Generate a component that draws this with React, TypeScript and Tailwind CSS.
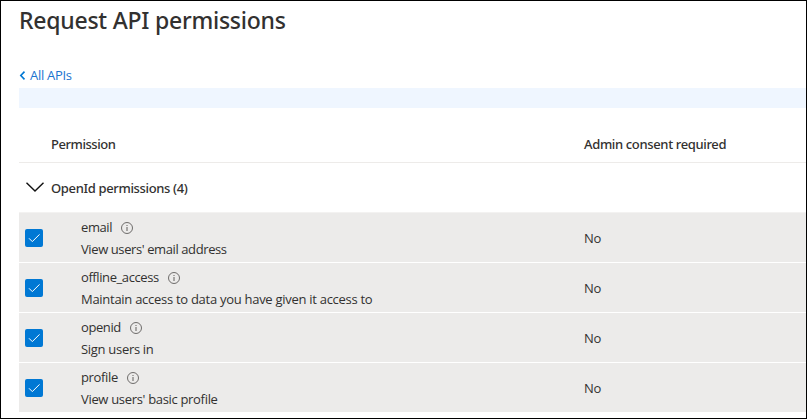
type Permission = {
  name: string;
  description: string;
  nameClass: string;
  descriptionClass: string;
};

const permissions: Permission[] = [
  { name: 'email', description: "View users' email address", nameClass: 'tracking-[-0.4px]', descriptionClass: 'tracking-[-0.4px]' },
  { name: 'offline_access', description: 'Maintain access to data you have given it access to', nameClass: 'tracking-[-0.41px]', descriptionClass: 'tracking-[-0.28px]' },
  { name: 'openid', description: 'Sign users in', nameClass: 'tracking-[-0.4px]', descriptionClass: 'tracking-[-0.3px]' },
  { name: 'profile', description: "View users' basic profile", nameClass: 'tracking-[-0.35px]', descriptionClass: 'tracking-[-0.32px]' },
];

function InfoIcon() {
  return (
    <svg className="mt-0.5 h-3 w-3 shrink-0" viewBox="0 0 12 12" fill="none" stroke="#605e5c">
      <circle cx="6" cy="6" r="5.5" strokeWidth="0.9" />
      <path d="M6 5v4M6 3v1" strokeWidth="1" />
    </svg>
  );
}

function Checkbox() {
  return (
    <span className="flex h-[18px] w-[18px] shrink-0 items-center justify-center rounded-[2px] bg-[#0078d4]">
      <svg className="h-[18px] w-[18px]" viewBox="0 0 18 18" fill="none" stroke="#fff" strokeWidth="1">
        <path d="M4 9.3L7.3 12.6L14.5 5.4" />
      </svg>
    </span>
  );
}

function PermissionRow({ permission }: { permission: Permission }) {
  return (
    <div className="flex h-[50px] shrink-0 items-center border-b border-white bg-[#ecebea] pl-[6px]">
      <div className="flex w-14 shrink-0 pt-px">
        <Checkbox />
      </div>
      <div className="flex h-full w-[503px] shrink-0 flex-col pt-[3px]">
        <div className="flex h-[22px] items-center gap-[9px]">
          <span className={permission.nameClass}>{permission.name}</span>
          <InfoIcon />
        </div>
        <div className={'flex h-[22px] items-center ' + permission.descriptionClass}>{permission.description}</div>
      </div>
      <div className="pt-px tracking-[-0.2px]">No</div>
    </div>
  );
}

export default function App() {
  return (
    <main className="flex h-[419px] w-[807px] flex-col overflow-hidden whitespace-nowrap border border-black bg-white pl-[18px] font-['Open_Sans','Noto_Sans',sans-serif] text-[13px] leading-[20px] text-[#323130]">
      <h1 className="flex h-10 shrink-0 items-center pb-0.5 font-['Noto_Sans','Open_Sans',sans-serif] text-[23px] font-medium leading-[38px] tracking-[-0.24px]">Request API permissions</h1>
      <div className="mt-[23px] flex h-[24px] shrink-0 items-center pb-0.5 text-[#1b74d0]">
        <svg className="mr-[4px] h-[9px] w-[7px]" viewBox="0 0 7 9" fill="none" stroke="#0078d4" strokeWidth="1.6">
          <path d="M5.5 .6L1.8 4.5L5.5 8.4" />
        </svg>
        <a className="tracking-[-0.3px]">All APIs</a>
      </div>
      <div className="h-5 shrink-0 bg-[#eff6ff]" />
      <div className="flex h-[55px] shrink-0 border-b border-[#edebe9] pl-8 pt-[26px] font-['Noto_Sans','Open_Sans',sans-serif] font-medium">
        <div className="w-[533px] tracking-[-0.45px]">Permission</div>
        <div className="tracking-[-0.35px]">Admin consent required</div>
      </div>
      <div className="flex h-[50px] shrink-0 items-center border-b border-[#f3f2f1] font-['Noto_Sans','Open_Sans',sans-serif] font-medium">
        <svg className="-mt-0.5 ml-[7px] mr-[7px] h-[10px] w-[18px]" viewBox="0 0 18 10" fill="none" stroke="#111" strokeWidth="1.4">
          <path d="M.5 .7L9 9L17.5 .7" />
        </svg>
        <span className="tracking-[-0.35px]">OpenId permissions (4)</span>
      </div>
      {permissions.map((permission) => (
        <PermissionRow key={permission.name} permission={permission} />
      ))}
    </main>
  );
}
